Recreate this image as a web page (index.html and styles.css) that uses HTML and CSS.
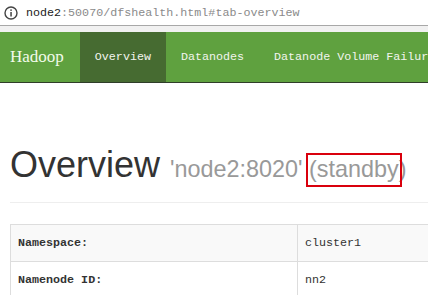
FILE: index.html
```html
<!DOCTYPE html>
<html lang="en">
<head>
    <meta charset="UTF-8">
    <meta name="viewport" content="width=device-width, initial-scale=1.0">
    <title>Namenode information</title>
    <link rel="stylesheet" href="styles.css">
</head>
<body>
    <div class="urlbar">
        <svg class="info" width="14" height="14" viewBox="0 0 14 14">
            <circle cx="7" cy="7" r="6" fill="none" stroke="#444" stroke-width="1.4"/>
            <rect x="6.3" y="6" width="1.5" height="4.5" fill="#444"/>
            <rect x="6.3" y="3.4" width="1.5" height="1.5" fill="#444"/>
        </svg>
        <span class="host">node2</span><span class="path">:50070/dfshealth.html#tab-overview</span>
    </div>
    <div class="strip"></div>

    <nav class="navbar">
        <span class="brand">Hadoop</span>
        <a class="tab active" href="#tab-overview">Overview</a>
        <a class="tab" href="#tab-datanode">Datanodes</a>
        <a class="tab" href="#tab-datanode-volume-failures">Datanode Volume Failures</a>
    </nav>

    <div class="container">
        <div class="page-header">
            <h1>Overview <small>'node2:8020' <span class="mark">(standby</span>)</small></h1>
        </div>

        <table class="info-table">
            <tr class="odd">
                <th>Namespace:</th>
                <td>cluster1</td>
            </tr>
            <tr>
                <th>Namenode ID:</th>
                <td>nn2</td>
            </tr>
        </table>
    </div>
</body>
</html>
```

FILE: styles.css
```css
html, body {
    overflow: hidden;
}

body {
    margin: 0;
    background-color: #fff;
    font-family: "Liberation Mono", monospace;
    color: #333;
}

.urlbar {
    display: flex;
    align-items: center;
    height: 25px;
    padding-left: 4px;
    border-bottom: 1px solid #a8a8a8;
    font-size: 11.7px;
    white-space: nowrap;
}

.urlbar .info {
    margin-right: 8px;
}

.urlbar .host {
    color: #222;
}

.urlbar .path {
    color: #8a8a8a;
}

.strip {
    height: 6px;
    background-color: #f1f1f1;
}

.navbar {
    display: flex;
    height: 50px;
    background-color: #5fa13f;
    border-bottom: 1px solid #2f3d29;
    white-space: nowrap;
    overflow: hidden;
}

.brand {
    display: flex;
    align-items: center;
    padding: 0 16px 0 10px;
    font-family: "Liberation Serif", serif;
    font-size: 17px;
    color: #f2fbea;
}

.tab {
    display: flex;
    align-items: center;
    padding: 0 15px;
    font-size: 11.7px;
    color: #f2f5ee;
    text-decoration: none;
}

.tab.active {
    background-color: #466b31;
}

.container {
    padding: 0 0 0 10px;
    width: 700px;
}

.page-header {
    margin-top: 62px;
    padding-bottom: 17px;
    border-bottom: 1px solid #eee;
}

h1 {
    margin: 0;
    font-family: "Liberation Sans", Arial, sans-serif;
    font-size: 36px;
    font-weight: 500;
    line-height: 1.1;
    color: #333;
}

h1 small {
    font-size: 23.4px;
    color: #999;
}

.mark {
    position: relative;
}

.mark::after {
    content: "";
    position: absolute;
    left: -3px;
    right: -3px;
    top: -3px;
    bottom: -5px;
    border: 2px solid #d9000d;
}

.info-table {
    margin-top: 21px;
    width: 600px;
    border-collapse: collapse;
    font-size: 11.7px;
}

.info-table th,
.info-table td {
    padding: 8px 8px 8px 7px;
    line-height: 20px;
    border: 1px solid #ddd;
    text-align: left;
    vertical-align: top;
}

.info-table th {
    width: 271px;
    font-weight: bold;
    color: #333;
}

.info-table td {
    color: #333;
}

.info-table .odd {
    background-color: #f9f9f9;
}
```
